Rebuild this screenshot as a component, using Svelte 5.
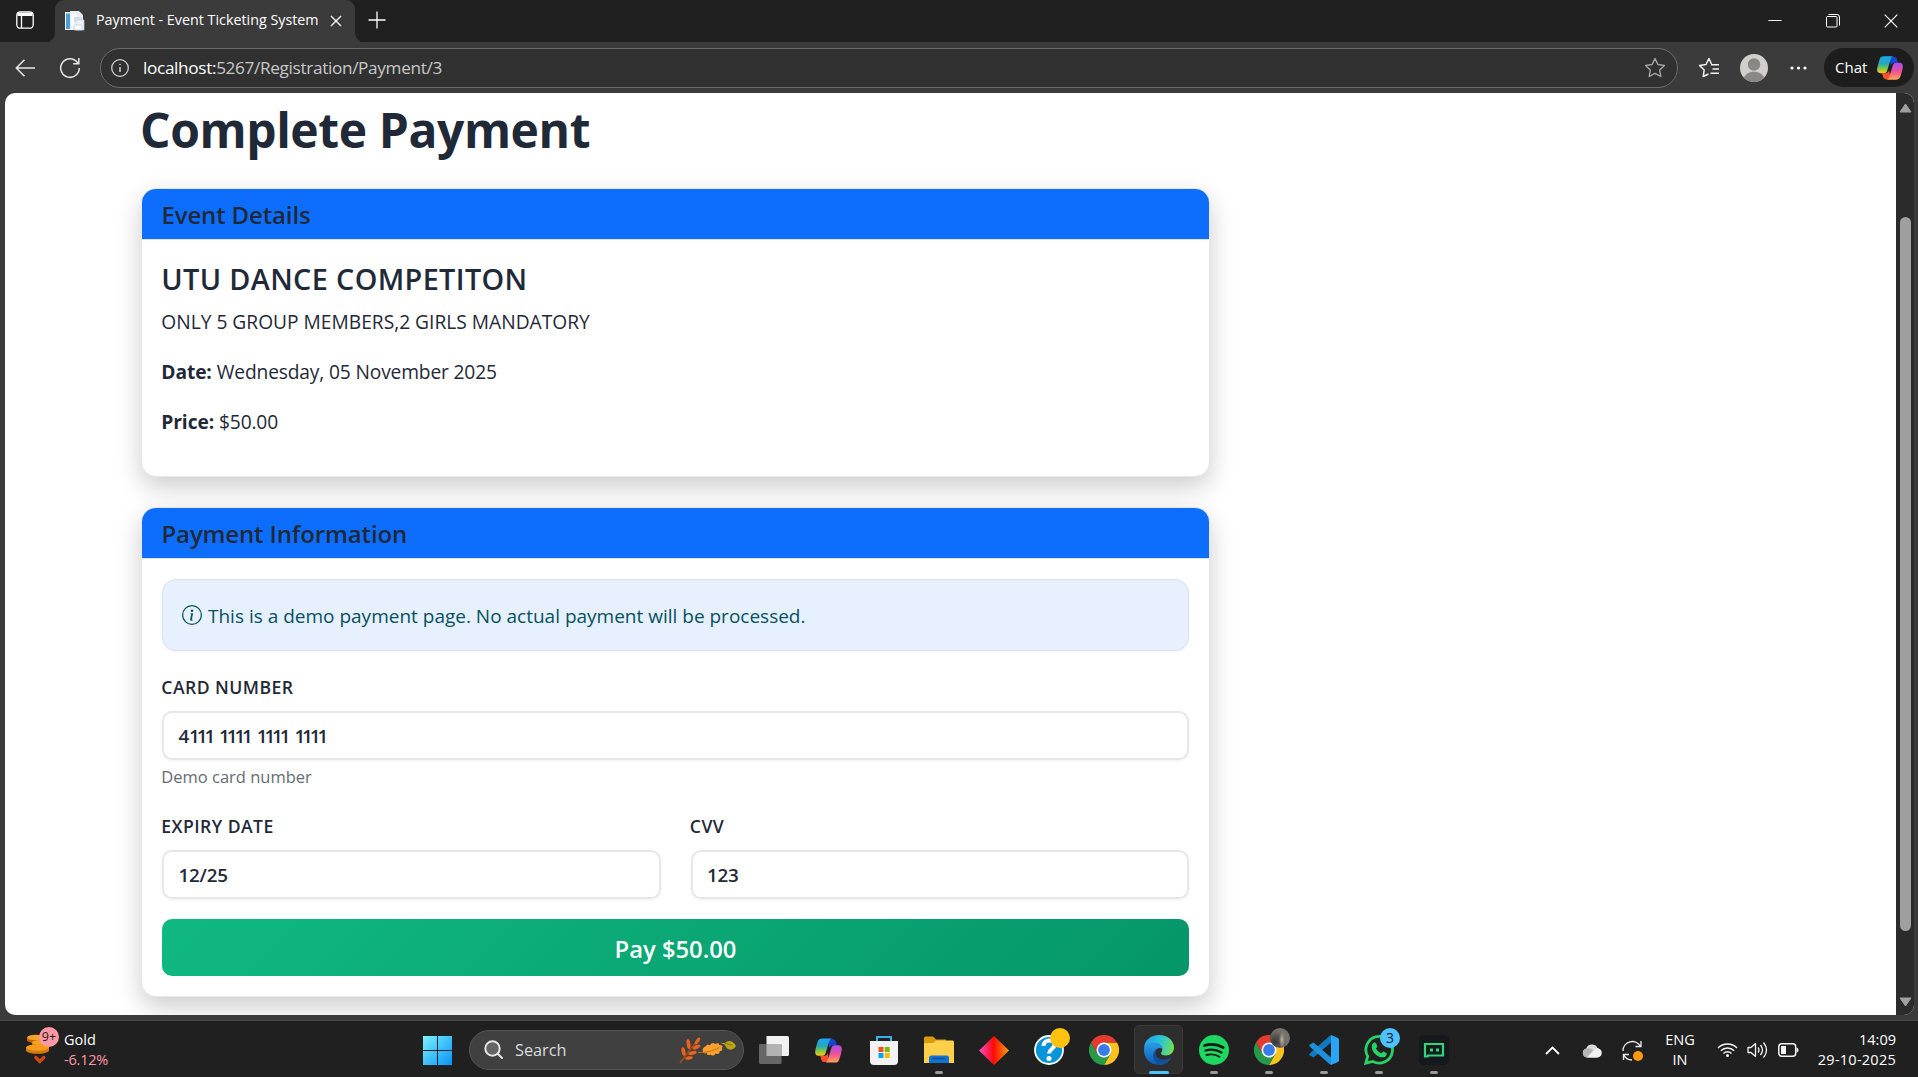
<script>
  let card = $state('4111 1111 1111 1111');
  let expiry = $state('12/25');
  let cvv = $state('123');
</script>

{#snippet copilot(size)}
  <svg width={size} height={size} viewBox="0 0 30 30">
    <defs>
      <linearGradient id="cpa" x1="0" y1="0" x2="0" y2="1"><stop offset="0" stop-color="#1ba7f2" /><stop offset=".45" stop-color="#25a9b8" /><stop offset=".75" stop-color="#8fc93a" /><stop offset="1" stop-color="#ffc61c" /></linearGradient>
      <linearGradient id="cpb" x1="0" y1="0" x2="0" y2="1"><stop offset="0" stop-color="#a550f0" /><stop offset=".5" stop-color="#ee4f9b" /><stop offset="1" stop-color="#ffa653" /></linearGradient>
    </defs>
    <path d="M14 3h5c2 0 3 1 3.600 3l1 3.500h-4c-2 0-3 1-3.600 3z" fill="#1747d1" />
    <path d="M16 27h-5c-2 0-3-1-3.600-3l-1-3.500h4c2 0 3-1 3.600-3z" fill="#f4512c" />
    <path d="M8 2.500h11c-2 0-2.800 1.300-3.400 3.300l-3.500 11.600c-.6 2-1.500 3.100-3.600 3.100H5C2 20.500.8 18.500 1.300 15.500c.5-3.500 1.800-7.500 2.700-10C4.700 3.600 6 2.500 8 2.500z" fill="url(#cpa)" />
    <path d="M22 27.500H11c2 0 2.800-1.300 3.400-3.300l3.500-11.600c.6-2 1.500-3.100 3.600-3.100H25c3 0 4.200 2 3.700 5-.5 3.500-1.800 7.500-2.700 10-.7 1.900-2 3-4 3z" fill="url(#cpb)" />
  </svg>
{/snippet}

{#snippet chrome()}
  <svg width="30" height="30" viewBox="0 0 30 30">
    <path d="M15 7.500H28A15 15 0 0 1 15 30L21.500 18.700z" fill="#fcc31e" />
    <path d="M8.500 18.700 2 7.500A15 15 0 0 0 15 30l6.500-11.300z" fill="#27994a" />
    <path d="M2 7.500A15 15 0 0 1 28 7.500H15l-6.500 11.200z" fill="#e33b2e" />
    <circle cx="15" cy="15" r="7.500" fill="#fff" /><circle cx="15" cy="15" r="5.900" fill="#3a7bea" />
  </svg>
{/snippet}

<div class="screen">
  <header class="tabs">
    <div class="workspaces">
      <svg width="18" height="18" viewBox="0 0 18 18" fill="none" stroke="#fff" stroke-width="1.300"><rect x=".8" y=".8" width="16.400" height="16.400" rx="3.500" /><path d="M1.500 1.500h15V5h-15z" fill="#fff" stroke="none" /><path d="M5.500 5v12" /></svg>
    </div>
    <div class="tab">
      <svg class="fav" width="21" height="20" viewBox="0 0 21 20"><path d="M1 1h9v18H1z" fill="#f2f6fa" /><path d="M2 2.500h5.500v15.500H2z" fill="#4b9fd6" /><path d="M6 0h9l4 4v14H6z" fill="#e8eef4" /><path d="M7 3h6v13H7z" fill="#f8fafc" /><path d="M10 6h8v5h-8z" fill="#d6dde6" /><path d="M12 9h8v10h-8z" fill="#eef2f6" stroke="#c3cdd8" stroke-width=".7" /><path d="M10 14h8v5h-8z" fill="#f7fafc" stroke="#c3cdd8" stroke-width=".7" /></svg>
      <span class="tabtitle t">Payment - Event Ticketing System</span>
      <svg class="tabclose" width="12" height="12" viewBox="0 0 12 12" stroke="#fff" stroke-width="1.300"><path d="M1 1l10 10M11 1 1 11" /></svg>
    </div>
    <svg class="plus" width="18" height="18" viewBox="0 0 18 18" stroke="#fff" stroke-width="1.300"><path d="M9 .5v17M.5 9h17" /></svg>
    <div class="winctl">
      <svg width="14" height="14" viewBox="0 0 14 14" stroke="#fff"><path d="M.5 6.500h13" /></svg>
      <svg width="14" height="14" viewBox="0 0 14 14" stroke="#fff" fill="none"><rect x=".5" y="2.500" width="10.500" height="10.500" rx="1" /><path d="M2.500 .5h8.500q2.500 0 2.500 2.500v8.500" /></svg>
      <svg width="14" height="14" viewBox="0 0 14 14" stroke="#fff" stroke-width="1.200"><path d="M.7.700l12.600 12.600M13.300.7.700 13.300" /></svg>
    </div>
  </header>

  <div class="toolbar">
    <svg class="back" width="21" height="18" viewBox="0 0 21 18" fill="none" stroke="#e8e8e8" stroke-width="1.500"><path d="M20 9H1.500M9.500 .8 1.300 9l8.200 8.200" /></svg>
    <svg class="reload" width="22" height="22" viewBox="0 0 22 22" fill="none" stroke="#e8e8e8" stroke-width="1.500"><path d="M20.300 11a9.300 9.300 0 1 1-3.600-7.300l2.500 2.500M19.800 1v5.700h-5.700" /></svg>
    <div class="address">
      <svg width="18" height="18" viewBox="0 0 18 18" fill="none" stroke="#d0d0d0" stroke-width="1.300"><circle cx="9" cy="9" r="8.300" /><path d="M9 8v5" stroke-width="1.500" /><circle cx="9" cy="5.500" r=".6" fill="#d0d0d0" stroke-width=".5" /></svg>
      <span class="url t"><b>localhost:</b>5267/Registration/Payment/3</span>
      <svg class="star" width="22" height="21" viewBox="0 0 22 21" fill="none" stroke="#a6a6a6" stroke-width="1.400" stroke-linejoin="round"><path d="m11 1.500 2.900 6 6.500.900-4.700 4.600 1.100 6.500-5.800-3.100-5.800 3.100 1.100-6.500L1.600 8.400l6.500-.9z" /></svg>
    </div>
    <svg class="favs" width="22" height="21" viewBox="0 0 22 21" fill="none" stroke="#f2f2f2" stroke-width="1.500" stroke-linejoin="round"><path d="M10.500 17 5.200 19.500l1-6.500L1.500 8.400 8 7.500l2.900-6 2.600 5.500M13 7.800h8M14.500 12H21M12.500 16.200H21" /></svg>
    <svg class="avatar" width="28" height="28" viewBox="0 0 28 28"><circle cx="14" cy="14" r="14" fill="#d0cfcc" /><circle cx="14" cy="10.500" r="6.200" fill="#8b8784" /><path d="M4 23.700c1.500-4 5.500-6 10-6s8.500 2 10 6A14 14 0 0 1 4 23.700z" fill="#8b8784" /></svg>
    <svg class="dots" width="17" height="4" viewBox="0 0 17 4" fill="#fff"><circle cx="2" cy="2" r="1.600" /><circle cx="8.500" cy="2" r="1.600" /><circle cx="15" cy="2" r="1.600" /></svg>
    <div class="chat"><span class="t">Chat</span>{@render copilot(28)}</div>
  </div>

  <div class="viewport">
    <main class="page">
      <h1><span class="t">Complete Payment</span></h1>
      <section class="card event">
        <h5><span class="t">Event Details</span></h5>
        <div class="body">
          <h4><span class="t">UTU DANCE COMPETITON</span></h4>
          <p><span class="t">ONLY 5 GROUP MEMBERS,2 GIRLS MANDATORY</span></p>
          <p><strong class="t">Date:</strong> <span class="t value">Wednesday, 05 November 2025</span></p>
          <p><strong class="t">Price:</strong> <span class="t value">$50.00</span></p>
        </div>
      </section>
      <section class="card">
        <h5><span class="t">Payment Information</span></h5>
        <div class="body form">
          <div class="alert">
            <svg width="20" height="20" viewBox="0 0 16 16" fill="#055160"><path d="M8 15A7 7 0 1 1 8 1a7 7 0 0 1 0 14m0 1A8 8 0 1 0 8 0a8 8 0 0 0 0 16" /><path d="m8.930 6.588-2.290.287-.082.380.450.083c.294.070.352.176.288.469l-.738 3.468c-.194.897.105 1.319.808 1.319.545 0 1.178-.252 1.465-.598l.088-.416c-.2.176-.492.246-.686.246-.275 0-.375-.193-.304-.533zM9 4.500a1 1 0 1 1-2 0 1 1 0 0 1 2 0" /></svg>
            <span class="t">This is a demo payment page. No actual payment will be processed.</span>
          </div>
          <div class="label"><span class="t">CARD NUMBER</span></div>
          <div class="input"><span class="t">{card.slice(0, 1)}<span class="digits">{card.slice(1)}</span></span></div>
          <small><span class="t">Demo card number</span></small>
          <div class="row">
            <div><div class="label"><span class="t">EXPIRY DATE</span></div><div class="input"><span class="t">{expiry}</span></div></div>
            <div><div class="label"><span class="t">CVV</span></div><div class="input"><span class="t">{cvv}</span></div></div>
          </div>
          <button><span class="t">Pay $50.00</span></button>
        </div>
      </section>
    </main>
    <div class="scroll">
      <svg width="13" height="10" viewBox="0 0 13 10"><path d="M6.500 1 12 9H1z" fill="#a0a0a0" stroke="#a0a0a0" stroke-linejoin="round" /></svg>
      <div class="thumb"></div>
      <svg width="13" height="10" viewBox="0 0 13 10"><path d="M6.500 9 12 1H1z" fill="#a0a0a0" stroke="#a0a0a0" stroke-linejoin="round" /></svg>
    </div>
  </div>

  <footer class="taskbar">
    <div class="widget">
      <div class="coins">
        <svg width="24" height="32" viewBox="0 0 24 32"><path d="M1 5v4c4 3 14 3 18 0V5z" fill="#b8610b" /><ellipse cx="10" cy="5.500" rx="9" ry="2.800" fill="#f7a224" /><path d="M6 10v4c4 3 14 2.500 17 0v-4z" fill="#c26a0c" /><ellipse cx="14.500" cy="10.500" rx="8.500" ry="2.600" fill="#f7a224" /><path d="M0 15v4c4 3.800 19 3.800 23 0v-4z" fill="#d87a0c" /><ellipse cx="11.500" cy="15.500" rx="11.500" ry="3.200" fill="#f59c1c" /><path d="m9.800 25.500 4 4 4-4" fill="none" stroke="#d24a12" stroke-width="3.200" stroke-linecap="round" /></svg>
        <span class="badge">9+</span>
      </div>
      <div class="stock"><span class="t">Gold</span><em class="t">-6.12%</em></div>
    </div>
    <svg class="win" width="29" height="29" viewBox="0 0 29 29"><defs><linearGradient id="wn" gradientUnits="userSpaceOnUse" x1="0" y1="0" x2="29" y2="29"><stop offset="0" stop-color="#7df3fd" /><stop offset=".5" stop-color="#3fc1fb" /><stop offset="1" stop-color="#0a93f9" /></linearGradient></defs><path d="M0 0h14v14H0zM15 0h14v14H15zM0 15h14v14H0zM15 15h14v14H15z" fill="url(#wn)" /></svg>
    <div class="search">
      <svg width="20" height="20" viewBox="0 0 20 20" fill="#646464" stroke="#e6e6e6" stroke-width="2"><circle cx="8.500" cy="8.500" r="7.200" /><path d="m13.500 13.500 4.500 4.500" stroke-linecap="round" /></svg>
      <span class="t">Search</span>
      <svg class="leaves" width="58" height="27" viewBox="0 0 58 27"><path d="M1 26C6 19 13 10 19 3" stroke="#b24613" stroke-width="1.300" fill="none" /><g fill="#e8641b"><ellipse cx="9.500" cy="7" rx="1.900" ry="5" transform="rotate(-8 9.500 7)" /><ellipse cx="4.500" cy="14.500" rx="1.900" ry="4.300" transform="rotate(-12 4.500 14.500)" /><ellipse cx="18.500" cy="4" rx="1.800" ry="4" transform="rotate(35 18.500 4)" /><ellipse cx="17.500" cy="10" rx="1.800" ry="4.300" transform="rotate(65 17.500 10)" /><ellipse cx="13.500" cy="16" rx="1.800" ry="4.300" transform="rotate(75 13.500 16)" /><ellipse cx="10" cy="21" rx="1.700" ry="3.800" transform="rotate(80 10 21)" /></g><path d="M24 14.500c-1-3 1-5 3-5 0-2 3-2 4-1 1-3 4-3 5-1.500 2-1.500 5-1 4 1 3 0 5 1.500 2.500 3 2 1.500 0 3.500-2 3 1 2.500-2 3.500-4 2.500-1 2.500-4 2.500-5 1-2 1.500-4 0-3.500-1.500-2 .5-4 .5-4-1.500z" fill="#f9a12e" /><path d="M19 15.500c8 0 14-1 21-5" stroke="#c96f12" fill="none" /><path d="M41 5.500c2 .5 3 .5 5 .5 3-3 8-3 11 3-3 5-9 5-11-1z" fill="#b8a50f" /><path d="M46 6.500l7 1.500" stroke="#857509" /></svg>
    </div>
    <div class="apps">
      <div class="app"><svg width="30" height="28" viewBox="0 0 30 28"><path d="M7.500 0H28.500Q30 0 30 1.500V18.500Q30 20 28.500 20H7.500z" fill="#f1f1f1" /><rect x="0" y="8" width="22.500" height="20" rx="1.200" fill="#666" /><path d="M7.500 8h15v12h-15z" fill="#b2b2b2" /></svg></div>
      <div class="app">{@render copilot(29)}</div>
      <div class="app"><svg width="30" height="30" viewBox="0 0 30 30"><path d="M8 7V2h14v5" fill="none" stroke="#2fb3f0" stroke-width="2" /><path d="M1 6h28v20q0 4-4 4H5q-4 0-4-4z" fill="#f2f2f2" /><path d="M9.500 12h5v5h-5z" fill="#f25022" /><path d="M15.700 12h5v5h-5z" fill="#7fba00" /><path d="M9.500 18h5v5h-5z" fill="#00a4ef" /><path d="M15.700 18h5v5h-5z" fill="#ffb900" /></svg></div>
      <div class="app run"><svg width="30" height="28" viewBox="0 0 30 28"><path d="M0 2Q0 .5 1.500 .5H9l3 3h10v8H0z" fill="#d99a0b" /><path d="M0 7h9l3-2.500h16.500Q30 4.500 30 6v21H0z" fill="#fdcf4a" /><path d="M5 27v-5q0-2.500 2.500-2.500h15q2.500 0 2.500 2.500v5z" fill="#0f73cf" /><path d="M8.500 22.500h13" stroke="#0a4b94" stroke-width="1.300" /></svg></div>
      <div class="app"><svg width="30" height="29" viewBox="0 0 30 29"><defs><linearGradient id="dm"><stop offset="0" stop-color="#f84bd0" /><stop offset=".48" stop-color="#ff0a0a" /><stop offset=".6" stop-color="#ff2a00" /><stop offset="1" stop-color="#f7a415" /></linearGradient></defs><path d="M15 0 30 14.500 15 29 0 14.500z" fill="url(#dm)" /></svg></div>
      <div class="app"><svg width="30" height="30" viewBox="0 0 30 30" fill="none"><circle cx="15" cy="15" r="14" fill="#0795da" stroke="#fff" stroke-width="1.800" /><path d="M9.500 11c0-7 11-7 11-1.500 0 4.500-5.500 4.500-5.500 9" stroke="#fff" stroke-width="4" /><circle cx="15" cy="23.500" r="2.500" fill="#fff" /></svg><span class="dot yellow"></span></div>
      <div class="app">{@render chrome()}</div>
      <div class="app run active"><svg width="30" height="30" viewBox="0 0 30 30"><defs><linearGradient id="eg1" x1="0" y1=".3" x2="1" y2=".5"><stop offset="0" stop-color="#249fe8" /><stop offset=".55" stop-color="#28c6d7" /><stop offset="1" stop-color="#71e04f" /></linearGradient><linearGradient id="eg2" x1="0" y1="0" x2="0" y2="1"><stop offset="0" stop-color="#2b9ce6" /><stop offset="1" stop-color="#0c5cb4" /></linearGradient></defs><path d="M0 14C0 5 7 0 15 0c9 0 15 6 15 12.500 0 5-3.800 8-8 8-3 0-5-1-5-2.300 0-1 1.300-1.500 1.300-4C18.300 11 15 8 10.500 8 5 8 1 10.500 0 14z" fill="url(#eg1)" /><path d="M0 14c1-4 5-6.500 9.500-6.500 5 0 8.800 3 8.800 6.700-2-2.500-6.800-1.500-7.300 3.800-.5 6 5 11 9 11C8 32 0 25 0 15z" fill="url(#eg2)" /><path d="M12 14.500C9.500 22 16 27.500 27.500 22.500 25 27.500 20 30 16 30 9.500 29 6.500 19 12 14.500z" fill="#124f9c" /></svg></div>
      <div class="app run"><svg width="30" height="30" viewBox="0 0 30 30" fill="none" stroke="#151c18" stroke-linecap="round"><circle cx="15" cy="15" r="15" fill="#1ed760" stroke="none" /><path d="M5.500 10.500c6-1.800 13-1.200 18.700 2" stroke-width="2.800" /><path d="M6.500 15.500c5.500-1.500 11-1 16 2" stroke-width="2.300" /><path d="M7.500 20c4.500-1.200 9-.8 13 1.700" stroke-width="1.900" /></svg></div>
      <div class="app run">{@render chrome()}<span class="dot photo"></span></div>
      <div class="app run"><svg width="30" height="30" viewBox="0 0 30 30"><path d="M22 0l7 3q1 .5 1 1.500v21q0 1-1 1.500l-7 3z" fill="#2ba4f1" /><path d="M22 7.500 4.500 22.500 1 20.500q-1.500-1 0-2.300L21 .4q1-.7 1 1z" fill="#1079c4" /><path d="M22 22.500 4.500 7.500 1 9.500q-1.500 1 0 2.300L21 29.600q1 .7 1-1z" fill="#1f91dc" /></svg></div>
      <div class="app run"><svg width="30" height="30" viewBox="0 0 30 30"><path d="M1.800 28.200 3.700 21.500A13.300 13.300 0 1 1 8.700 26.400z" fill="#20201f" stroke="#25d366" stroke-width="2.800" /><path d="M10.500 7.500c1 0 1.500.3 1.800 1.200l1 2.500c.2.800-1.300 2-1.300 2.500 1.300 2.300 3 3.700 5.200 4.500.6 0 1.500-1.800 2.200-1.800l3 1.500c.8.500.2 3.200-1.500 4-6 2.500-14.500-5.500-13-11.500.3-1.500 1.500-2.900 2.600-2.900z" fill="#25d366" /></svg><span class="dot count">3</span></div>
      <div class="app run"><svg width="30" height="30" viewBox="0 0 30 30" fill="none"><rect width="30" height="30" rx="5" fill="#15181c" /><path d="M7 9h17v11.500H9v1M6 8v13.500h3.500" stroke="#30d677" stroke-width="2.200" /><path d="M11 13.500h3v3h-3zM17 13.500h3v3h-3z" fill="#30d677" /></svg></div>
    </div>
    <div class="tray">
      <svg class="chev" width="15" height="9" viewBox="0 0 15 9" fill="none" stroke="#fff" stroke-width="1.800"><path d="m1 8 6.500-6.500L14 8" /></svg>
      <svg class="cloud" width="20" height="15" viewBox="0 0 20 15"><path d="M5 14.500a4.600 4.600 0 0 1-.8-9A6.200 6.200 0 0 1 15.500 5 5 5 0 0 1 15 14.500z" fill="#d8d8d8" /><path d="M5 14.500a4.600 4.600 0 0 1-.8-9C8 4.500 10 6 11 7.500z" fill="#b4b4b4" /><path d="M5 14.500 14 5.500c5-1 7 4 5 7q-1.500 2-4 2z" fill="#f2f2f2" /></svg>
      <div class="sync"><svg width="21" height="21" viewBox="0 0 21 21" fill="none" stroke="#e8e8e8" stroke-width="1.400"><path d="M1 11a9.300 9.300 0 0 1 17.500-4.500M19 1v5.500h-5.500M1.500 20v-5.500H7M1.500 14.500A9.300 9.300 0 0 0 10 20" /></svg><i></i></div>
      <div class="lang"><span class="t">ENG</span><span class="t">IN</span></div>
      <svg class="wifi" width="21" height="16" viewBox="0 0 21 16" fill="none" stroke="#f4f4f4" stroke-width="1.500"><path d="M1 6a13.500 13.500 0 0 1 19 0M3.800 8.800a9.500 9.500 0 0 1 13.400 0M6.500 11.500a5.700 5.700 0 0 1 8 0" /><circle cx="10.500" cy="13.500" r="1.500" fill="#f4f4f4" stroke="none" /></svg>
      <svg class="vol" width="21" height="18" viewBox="0 0 21 18" fill="none" stroke="#f4f4f4" stroke-width="1.300"><path d="M1 6.500h3L8.500 2.500v13L4 11.500H1z" stroke-linejoin="round" /><path d="M11 6.500q2 2.500 0 5M13.500 4q4 5 0 10M16.500 1.500q6 7.500 0 15" /></svg>
      <svg class="bat" width="21" height="14" viewBox="0 0 21 14"><rect x=".8" y=".8" width="16.900" height="12.400" rx="3" fill="none" stroke="#f4f4f4" stroke-width="1.500" /><path d="M3 3h5v8H3z" fill="#f4f4f4" /><path d="M18.500 4.500q2 0 2 2.500t-2 2.500z" fill="#f4f4f4" /></svg>
      <div class="clock"><span class="t">14:09</span><span class="t date">29-10-2025</span></div>
    </div>
  </footer>
</div>

<style>
  :global(body) { margin: 0; background: #202020; }
  .screen { width: 1918px; height: 1077px; overflow: hidden; display: flex; flex-direction: column; background: #3b3b3b; font-family: "Open Sans", "Noto Sans", sans-serif; box-sizing: border-box; }
  .screen :global(*) { box-sizing: border-box; }
  svg { display: block; flex: none; }
  .t { white-space: nowrap; }
  h1, h4, h5, p { margin: 0; }

  .tabs { height: 42px; flex: none; background: linear-gradient(90deg, #202020 0 50px, #3b3b3b 50px 360px, #202020 360px); display: flex; }
  .workspaces { width: 55px; padding: 11px 0 0 16px; background: #202020; border-bottom-right-radius: 9px; }
  .tab { width: 300px; background: #3b3b3b; display: flex; align-items: center; padding-left: 9px; height: 42px; border-radius: 9px 9px 0 0; box-shadow: 0 -9px 0 #202020; }
  .tabtitle { font-size: 14.300px; line-height: 38px; color: #fff; margin: 0 0 2px 11px; width: 222px; }
  .tabclose { margin-left: 12px; }
  .plus { box-sizing: content-box; padding: 11px 0 13px 13px; background: #202020; border-bottom-left-radius: 9px; }
  .winctl { margin-left: auto; padding: 14px 20px 0 0; display: flex; gap: 44px; }

  .toolbar { height: 51px; flex: none; display: flex; align-items: center; background: #3b3b3b; padding: 0 4px 0 15px; }
  .reload { margin-left: 23px; }
  .address { margin-left: 19px; width: 1578px; height: 40px; border: 1px solid #6c6c6c; border-radius: 20px; background: #313131; display: flex; align-items: center; padding: 0 11px 0 10px; }
  .url { margin-left: 14px; font-size: 17.200px; letter-spacing: -.34px; color: #c8c8c8; line-height: 36px; }
  .url b { font-weight: 400; color: #fff; }
  .star { margin-left: auto; }
  .favs { margin-left: 20px; }
  .avatar { margin-left: 20px; }
  .dots { margin-left: 22px; }
  .chat { margin-left: auto; width: 90px; height: 39px; border-radius: 20px; background: #1d1d1d; display: flex; align-items: center; justify-content: space-between; padding: 0 10px 0 11px; color: #fff; font-size: 15px; }
  .chat span { margin-bottom: 1px; }

  .viewport { height: 922px; flex: none; margin: 0 4px 0 5px; display: flex; border-radius: 10px; overflow: hidden; background: #fff; }
  .page { width: 1891px; padding: 0 0 0 136px; color: #1f2937; }
  .scroll { width: 18px; background: #2b2b2b; display: flex; flex-direction: column; align-items: center; padding: 10px 0 8px; }
  .thumb { width: 11px; height: 714px; border-radius: 6px; background: #9f9f9f; margin: 104px 0 auto; }

  h1 { font-size: 48px; line-height: 74px; font-weight: 700; height: 95px; letter-spacing: -.42px; margin-left: -1px; }
  .card { width: 1069px; border: 1px solid #e5e7eb; border-radius: 15px; background: #fff; box-shadow: 0 10px 26px rgba(0, 0, 0, .2); }
  .event { height: 289px; margin-bottom: 30px; }
  h5 { height: 51px; background: #0d6efd; border-bottom: 1px solid #dfe3e8; border-radius: 14px 14px 0 0; padding-left: 19.500px; font-size: 24px; line-height: 51px; font-weight: 600; letter-spacing: -.15px; }
  .body { padding: 20px; }
  h4 { font-size: 28.800px; line-height: 37px; height: 41px; font-weight: 600; letter-spacing: .37px; margin-left: -.7px; }
  p { font-size: 19.200px; line-height: 30px; margin: 6px 0 20px -.7px; }
  p + p { margin-top: 0; }
  .value { letter-spacing: -.15px; }
  strong { font-weight: 700; letter-spacing: -.1px; }

  .form { display: flex; flex-direction: column; }
  .alert { height: 72px; border: 1px solid #dde3ea; border-radius: 14px; background: #e7f0ff; display: flex; align-items: center; padding-left: 19px; font-size: 19px; color: #055160; box-shadow: 0 1px 3px rgba(0, 0, 0, .06); }
  .alert span { margin: 2px 0 0 6px; }
  .label { font-size: 17.600px; font-weight: 600; line-height: 28px; height: 38px; letter-spacing: .45px; margin-left: -.7px; }
  .form > .label { margin-top: 22px; }
  .input { height: 49px; border: 2px solid #e5e7eb; border-radius: 10px; padding-left: 14.500px; font-size: 18.800px; font-weight: 600; line-height: 47px; box-shadow: 0 1px 3px rgba(0, 0, 0, .06); letter-spacing: -.2px; }
  .digits { letter-spacing: -3.050px; word-spacing: 5.100px; }
  small { font-size: 16.500px; color: #666b72; line-height: 26px; margin: 4px 0 0 -.7px; height: 48px; }
  .row { display: grid; grid-template-columns: 1fr 1fr; gap: 30px; }
  button { font: 600 23.800px/60px "Open Sans", sans-serif; height: 57px; margin-top: 20px; border: 0; border-radius: 10px; color: #fff; background: linear-gradient(135deg, #10b981, #059669); padding: 0; display: flex; justify-content: center; }

  .taskbar { height: 57px; margin-top: 5px; flex: none; background: #202020; border-top: 1px solid #484848; display: flex; }
  .widget { width: 423px; padding: 6px 0 0 26px; display: flex; }
  .coins { position: relative; padding-top: 5px; width: 38px; }
  .badge { position: absolute; left: 13px; top: 0; width: 20px; height: 20px; border-radius: 10px; background: #ff98a4; color: #1c1c1c; font-size: 12.500px; line-height: 20px; text-align: center; }
  .stock, .lang, .clock { display: flex; flex-direction: column; align-items: flex-start; color: #fff; font-size: 14.500px; line-height: 20px; }
  .stock { margin-top: 3px; }
  .stock em { font-style: normal; color: #ff98a4; letter-spacing: -.2px; }
  .win { margin-top: 15px; }
  .search { width: 275px; height: 40px; margin: 9px 0 0 17px; border: 1px solid #555; border-radius: 20px; background: #404040; display: flex; align-items: center; padding: 0 6px 0 14px; color: #dcdcdc; font-size: 16.300px; }
  .search span { margin-left: 11px; }
  .leaves { margin-left: auto; }
  .apps { display: flex; margin-left: 2px; }
  .app { width: 55px; height: 56px; position: relative; display: grid; place-items: center; padding-top: 2px; }
  .run::after { content: ''; position: absolute; bottom: 3px; left: 24px; width: 8px; height: 3px; border-radius: 2px; background: #9a9a9a; }
  .active::before { content: ''; position: absolute; inset: 4px 3px 3px 3px; border-radius: 5px; border: 1px solid #3a3a3a; background: #2e2e2e; }
  .active svg { position: relative; }
  .active::after { left: 18px; width: 20px; background: #4cc2ff; }
  .dot { position: absolute; left: 29px; top: 7px; width: 20px; height: 20px; border-radius: 50%; }
  .yellow { background: #ffc20e; }
  .photo { background: radial-gradient(ellipse 3px 8px at 60% 60%, #c5b8a5, #c5b8a500), radial-gradient(circle at 25% 70%, #38383a, #77746f 60%, #6d6964); }
  .count { background: #4cc2ff; color: #10202c; font-size: 14px; line-height: 20px; text-align: center; }
  .tray { margin-left: auto; margin-right: 22px; display: flex; align-items: center; padding-top: 2px; }
  .cloud { margin-left: 22px; }
  .sync { margin-left: 20px; position: relative; }
  .sync i { position: absolute; right: 0; bottom: 0; width: 10px; height: 10px; border-radius: 5px; background: #ff9a0c; }
  .lang { align-items: center; margin-left: 22px; width: 30px; }
  .wifi { margin-left: 22px; }
  .vol { margin-left: 9px; }
  .bat { margin-left: 10px; }
  .clock { align-items: flex-end; width: 97px; }
  .date { letter-spacing: .25px; }
</style>
